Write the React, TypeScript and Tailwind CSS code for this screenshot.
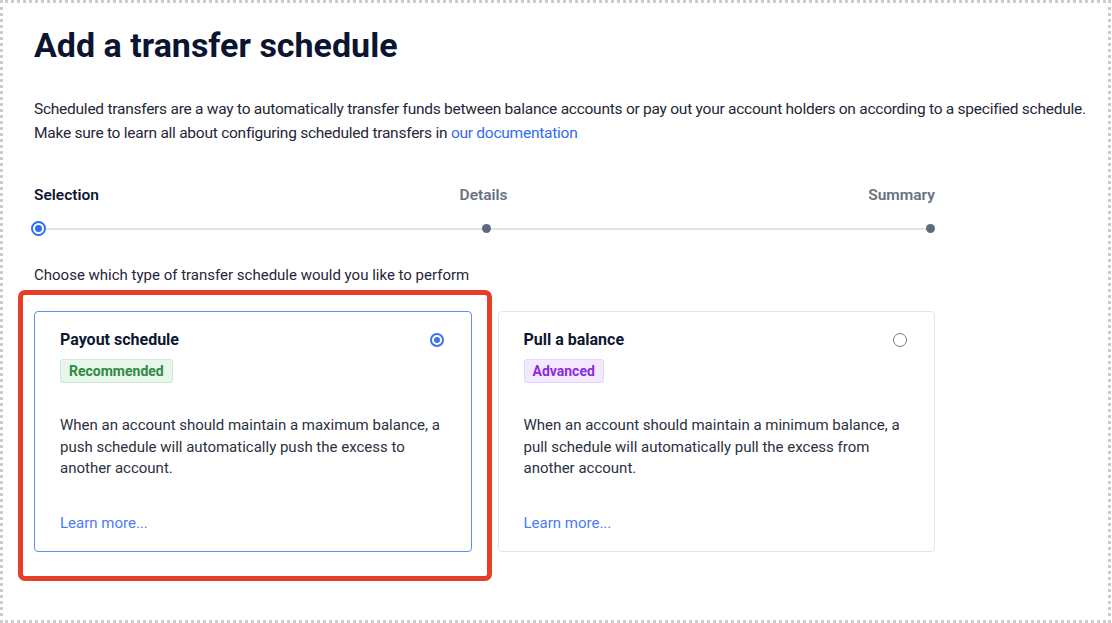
import React from 'react';

type Option = {
    title: string;
    badge: string;
    badgeClass: string;
    description: string;
    selected: boolean;
};

const options: Option[] = [
    {
        title: 'Payout schedule',
        badge: 'Recommended',
        badgeClass: 'bg-[#e7f5ea] border-[#cfe8d5] text-[#2f8a43]',
        description:
            'When an account should maintain a maximum balance, a push schedule will automatically push the excess to another account.',
        selected: true,
    },
    {
        title: 'Pull a balance',
        badge: 'Advanced',
        badgeClass: 'bg-[#f3e9fe] border-[#e6d4fb] text-[#8a2be2]',
        description:
            'When an account should maintain a minimum balance, a pull schedule will automatically pull the excess from another account.',
        selected: false,
    },
];

function Radio({ checked }: { checked: boolean }) {
    if (checked) {
        return (
            <span className="flex h-[14px] w-[14px] items-center justify-center rounded-full border-2 border-[#3a74f2]">
                <span className="h-[6px] w-[6px] rounded-full bg-[#3a74f2]" />
            </span>
        );
    }
    return <span className="block h-[14px] w-[14px] rounded-full border border-[#707786]" />;
}

function OptionCard({ option }: { option: Option }) {
    return (
        <div
            className={`flex h-[241px] flex-col rounded-[4px] border bg-white pl-[25px] pr-[27px] pt-[16px] pb-[17px] ${
                option.selected ? 'border-[#5e8ff3]' : 'border-[#e2e4e9]'
            }`}
        >
            <div className="flex items-center justify-between">
                <h3 className="text-[16px] leading-[24px] font-bold text-[#0e1731]">{option.title}</h3>
                <Radio checked={option.selected} />
            </div>
            <div>
                <span
                    className={`mt-[7px] inline-block rounded-[3px] border px-[8px] text-[14px] leading-[22px] font-bold ${option.badgeClass}`}
                >
                    {option.badge}
                </span>
            </div>
            <p className="mt-[32px] text-[15px] leading-[21.5px] text-[#2a3142]">{option.description}</p>
            <a href="#" className="mt-auto text-[15px] leading-[21px] text-[#4a7cf6]">
                Learn more...
            </a>
        </div>
    );
}

export default function App() {
    return (
        <div className="h-[623px] w-[1111px] overflow-hidden border-[3px] border-dotted border-[#cdcdcd] bg-white font-['Roboto',sans-serif]">
            <div className="pl-[31px] pt-[22px]">
                <h1 className="text-[34px] leading-[40px] font-bold text-[#0b1532]">Add a transfer schedule</h1>

                <p className="mt-[32px] text-[15.5px] leading-[24px] tracking-[-0.25px] text-[#1f2738]">
                    Scheduled transfers are a way to automatically transfer funds between balance accounts or pay out
                    your account holders on according to a specified schedule.
                    <br />
                    Make sure to learn all about configuring scheduled transfers in{' '}
                    <a href="#" className="text-[#2f6df0]">
                        our documentation
                    </a>
                </p>

                <div className="mt-[39px] w-[901px]">
                    <div className="flex items-center justify-between text-[15.5px] leading-[22px] font-semibold">
                        <span className="text-[#0e1731]">Selection</span>
                        <span className="text-[#687282]">Details</span>
                        <span className="text-[#687282]">Summary</span>
                    </div>
                    <div className="mt-[15px] flex items-center">
                        <span className="-ml-[3px] flex h-[15px] w-[15px] shrink-0 items-center justify-center rounded-full border-2 border-[#2f6df0] bg-white">
                            <span className="h-[7px] w-[7px] rounded-full bg-[#2f6df0]" />
                        </span>
                        <span className="h-[2px] flex-1 bg-[#dfe3e9]" />
                        <span className="h-[9px] w-[9px] shrink-0 rounded-full bg-[#5f6a80]" />
                        <span className="h-[2px] flex-1 bg-[#dfe3e9]" />
                        <span className="h-[9px] w-[9px] shrink-0 rounded-full bg-[#5f6a80]" />
                    </div>
                </div>

                <p className="mt-[28px] text-[15px] leading-[22px] text-[#1f2738]">
                    Choose which type of transfer schedule would you like to perform
                </p>

                <div className="mt-[25px] grid w-[901px] grid-cols-2 gap-[26px]">
                    {options.map((option) => (
                        <div key={option.title} className="relative">
                            <OptionCard option={option} />
                            {option.selected && (
                                <div className="pointer-events-none absolute -top-[21px] -right-[20px] -bottom-[29px] -left-[16px] rounded-[7px] border-[5px] border-[#e63e27]" />
                            )}
                        </div>
                    ))}
                </div>
            </div>
        </div>
    );
}
